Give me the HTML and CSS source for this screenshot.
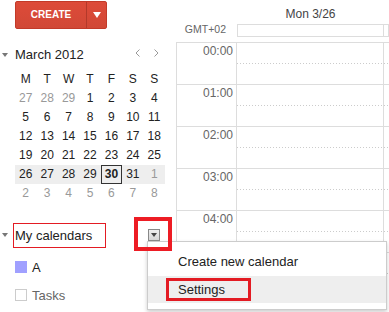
FILE: index.html
```html
<!DOCTYPE html>
<html lang="en">

<head>
    <meta charset="UTF-8">
    <title>Calendar</title>
    <link rel="stylesheet" href="styles.css">
</head>

<body>
    <div class="app">
        <!-- 左侧栏 -->
        <aside class="sidebar">
            <div class="create">
                <span class="create-main">CREATE</span>
                <span class="create-more"><span class="tri-white"></span></span>
            </div>

            <div class="month-head">
                <span class="tri-gray"></span>
                <span class="month-title">March 2012</span>
                <span class="month-nav">
                    <svg width="5" height="8" viewBox="0 0 5 8"><path d="M4.5 0.5 L1 4 L4.5 7.5" fill="none" stroke="#999" stroke-width="1"/></svg>
                    <svg width="5" height="8" viewBox="0 0 5 8"><path d="M0.5 0.5 L4 4 L0.5 7.5" fill="none" stroke="#999" stroke-width="1"/></svg>
                </span>
            </div>

            <div class="mini">
                <span>M</span><span>T</span><span>W</span><span>T</span><span>F</span><span>S</span><span>S</span>
                <span class="off">27</span><span class="off">28</span><span class="off">29</span><span>1</span><span>2</span><span>3</span><span>4</span>
                <span>5</span><span>6</span><span>7</span><span>8</span><span>9</span><span>10</span><span>11</span>
                <span>12</span><span>13</span><span>14</span><span>15</span><span>16</span><span>17</span><span>18</span>
                <span>19</span><span>20</span><span>21</span><span>22</span><span>23</span><span>24</span><span>25</span>
                <span class="wk">26</span><span class="wk">27</span><span class="wk">28</span><span class="wk">29</span><span class="wk today">30</span><span class="wk">31</span><span class="wk off">1</span>
                <span class="off">2</span><span class="off">3</span><span class="off">4</span><span class="off">5</span><span class="off">6</span><span class="off">7</span><span class="off">8</span>
            </div>

            <div class="mycal">
                <span class="tri-gray"></span>
                <span class="mycal-label">My calendars</span>
                <span class="mycal-btn-mark"><span class="mycal-btn"><span class="tri-dark"></span></span></span>
            </div>
            <div class="cal-item"><span class="swatch"></span>A</div>
            <div class="cal-item muted"><span class="swatch empty"></span>Tasks</div>
        </aside>

        <!-- 周视图 -->
        <main class="week">
            <div class="week-head">
                <div class="tcell"></div>
                <div class="dcell day-name">Mon 3/26</div>
            </div>
            <div class="allday">
                <div class="tcell tz">GMT+02</div>
                <div class="allday-box"></div>
                <div class="allday-box next"></div>
            </div>
            <div class="grid">
                <div class="hour"><div class="tcell time">00:00</div><div class="dcell slot"></div><div class="dcell slot next"></div></div>
                <div class="hour"><div class="tcell time">01:00</div><div class="dcell slot"></div><div class="dcell slot next"></div></div>
                <div class="hour"><div class="tcell time">02:00</div><div class="dcell slot"></div><div class="dcell slot next"></div></div>
                <div class="hour"><div class="tcell time">03:00</div><div class="dcell slot"></div><div class="dcell slot next"></div></div>
                <div class="hour"><div class="tcell time">04:00</div><div class="dcell slot"></div><div class="dcell slot next"></div></div>
                <div class="hour"><div class="tcell time">05:00</div><div class="dcell slot"></div><div class="dcell slot next"></div></div>
            </div>
        </main>
    </div>

    <!-- 下拉菜单 -->
    <div class="menu">
        <div class="menu-item">Create new calendar</div>
        <div class="menu-item active"><span class="mark">Settings</span></div>
    </div>
</body>

</html>
```

FILE: styles.css
```css
/* 全局样式 */
body {
    margin: 0;
    width: 389px;
    height: 312px;
    overflow: hidden;
    position: relative;
    font-family: 'Liberation Sans', Arial, sans-serif;
    color: #222;
    background: #fff;
}

.app {
    display: flex;
    width: 389px;
    overflow: hidden;
}

/* 左侧栏 */
.sidebar {
    width: 176px;
    flex: none;
}

.create {
    display: flex;
    margin: 1px 0 0 15px;
    width: 92px;
    height: 28px;
    box-sizing: border-box;
    border: 1px solid #c23a29;
    border-radius: 2px;
    background: linear-gradient(#dd4b39, #d14836);
}

.create-main {
    width: 70px;
    color: #fff;
    font-size: 10px;
    font-weight: bold;
    line-height: 26px;
    text-align: center;
    border-right: 1px solid #b3392a;
}

.create-more {
    flex: 1;
    display: flex;
    align-items: center;
    justify-content: center;
}

.tri-white {
    border-left: 4px solid transparent;
    border-right: 4px solid transparent;
    border-top: 6px solid #fff;
}

.tri-gray {
    display: inline-block;
    border-left: 3px solid transparent;
    border-right: 3px solid transparent;
    border-top: 4px solid #777;
}

.tri-dark {
    border-left: 3px solid transparent;
    border-right: 3px solid transparent;
    border-top: 4px solid #444;
}

/* 小月历 */
.month-head {
    display: flex;
    align-items: center;
    height: 20px;
    margin-top: 16px;
    padding-left: 2px;
}

.month-title {
    margin-left: 7px;
    font-size: 13px;
    line-height: 20px;
}

.month-nav {
    display: flex;
    gap: 14px;
    margin-left: auto;
    margin-right: 17px;
    margin-top: -4px;
}

.mini {
    display: grid;
    grid-template-columns: repeat(7, 1fr);
    grid-auto-rows: 19px;
    width: 150px;
    margin: 5px 0 0 15px;
    font-size: 12px;
    line-height: 19px;
    text-align: center;
}

.mini .off {
    color: #999;
}

.mini .wk {
    background: #eee;
}

.mini .today {
    border: 1px solid #333;
    line-height: 17px;
    font-weight: bold;
}

/* 我的日历 */
.mycal {
    display: flex;
    align-items: flex-start;
    margin-top: 14px;
    padding-left: 2px;
}

.mycal .tri-gray {
    margin-top: 16px;
}

.mycal-label {
    margin: 6px 0 0 5px;
    width: 93px;
    height: 25px;
    box-sizing: border-box;
    border: 1px solid #e31b23;
    padding-left: 1px;
    font-size: 13px;
    line-height: 23px;
}

.mycal-btn-mark {
    position: relative;
    z-index: 2;
    display: flex;
    align-items: center;
    justify-content: center;
    margin-left: 28px;
    width: 38px;
    height: 34px;
    box-sizing: border-box;
    border: 4px solid #ed1c24;
    padding: 1px 0 0 2px;
}

.mycal-btn {
    display: flex;
    align-items: center;
    justify-content: center;
    width: 12px;
    height: 12px;
    box-sizing: border-box;
    border: 1px solid #888;
    background: linear-gradient(#eee, #d6d6d6);
}

.cal-item {
    display: flex;
    align-items: center;
    height: 28px;
    padding-left: 15px;
    font-size: 13px;
}

.mycal + .cal-item {
    margin-top: 2px;
}

.cal-item.muted {
    color: #666;
}

.swatch {
    width: 12px;
    height: 12px;
    margin-right: 5px;
    background: #a0a0ff;
    box-sizing: border-box;
}

.swatch.empty {
    background: #fff;
    border: 1px solid #ccc;
}

/* 周视图 */
.week {
    flex: 1;
    min-width: 0;
    overflow: hidden;
}

.tcell {
    width: 61px;
    flex: none;
    box-sizing: border-box;
}

.dcell {
    width: 147px;
    flex: none;
    box-sizing: border-box;
}

.dcell.next {
    flex: 1;
    width: auto;
}

.week-head {
    display: flex;
    height: 22px;
}

.day-name {
    padding-top: 7px;
    font-size: 12px;
    line-height: 14px;
    color: #444;
    text-align: center;
}

.allday {
    display: flex;
    height: 20px;
}

.tz {
    padding-right: 11px;
    font-size: 10.5px;
    line-height: 14px;
    color: #666;
    text-align: right;
}

.allday-box {
    width: 147px;
    height: 13px;
    margin-top: 2px;
    box-sizing: border-box;
    border: 1px solid #ddd;
}

.allday-box.next {
    flex: 1;
    border-left: none;
}

.grid {
    border-left: 1px solid #ddd;
}

.hour {
    display: flex;
    height: 42px;
    border-top: 1px solid #ddd;
    box-sizing: border-box;
}

.hour .tcell {
    width: 60px;
    border-right: 1px solid #ddd;
}

.time {
    padding: 1px 3px 0 0;
    font-size: 12px;
    line-height: 14px;
    color: #666;
    text-align: right;
}

.slot {
    border-right: 1px solid #ddd;
    background: repeating-linear-gradient(to right, #ccc 0 1px, transparent 1px 3px) 0 20px / 100% 1px no-repeat;
}

.slot.next {
    border-right: none;
}

/* 下拉菜单 */
.menu {
    position: absolute;
    z-index: 1;
    left: 147px;
    top: 241px;
    width: 240px;
    box-sizing: border-box;
    padding: 6px 0;
    background: #fff;
    border: 1px solid #ccc;
    box-shadow: 0 2px 4px rgba(0, 0, 0, 0.2);
    font-size: 13px;
}

.menu-item {
    height: 28px;
    line-height: 28px;
    padding-left: 30px;
}

.menu-item.active {
    height: 27px;
    display: flex;
    align-items: center;
    padding-left: 18px;
    background: #eee;
}

.mark {
    width: 85px;
    height: 23px;
    box-sizing: border-box;
    border: 3px solid #e31b23;
    padding-left: 9px;
    line-height: 17px;
}
```
